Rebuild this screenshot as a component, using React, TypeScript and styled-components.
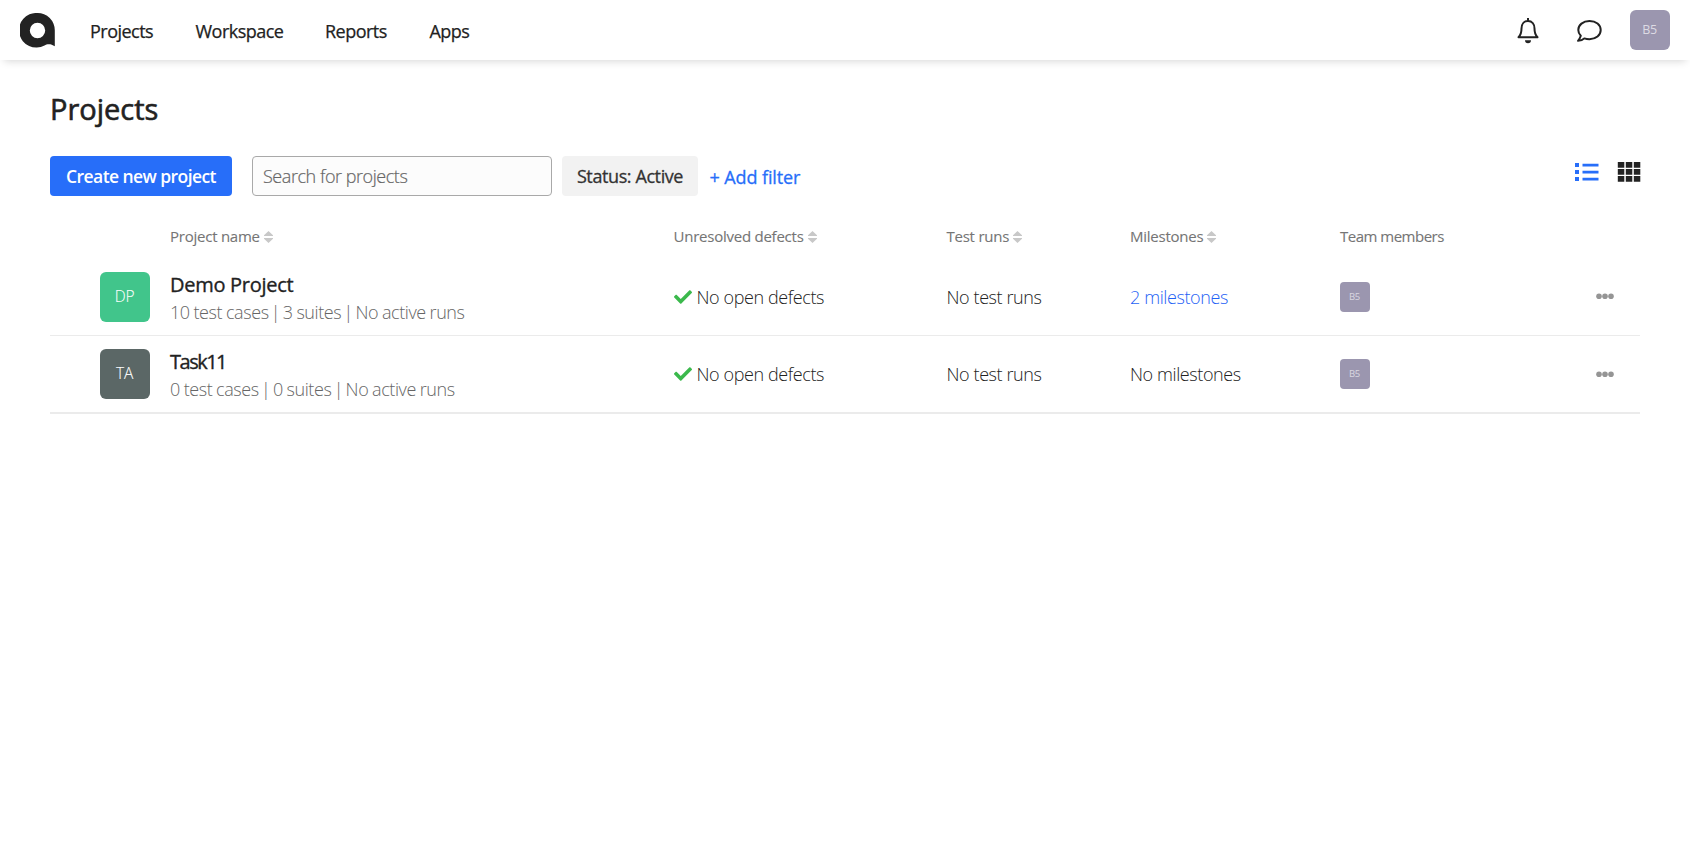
import React, { Fragment } from 'react';
import styled, { createGlobalStyle } from 'styled-components';
import { FaCheck } from 'react-icons/fa';

const GlobalStyle = createGlobalStyle`
  * { box-sizing: border-box; }
  body {
    margin: 0;
    background: #fff;
    color: #222;
    font-family: 'Segoe UI', 'Open Sans', 'Noto Sans', sans-serif;
    font-size: 18px;
  }
  a { color: inherit; text-decoration: none; }
  button, input { font: inherit; }
`;

const Header = styled.header`
  display: flex;
  align-items: center;
  height: 60px;
  padding: 0 20px;
  background: #fff;
  box-shadow: 0 5px 8px -4px rgba(0, 0, 0, 0.17);
`;
const Logo = styled.svg`
  display: block;
  margin-right: 35px;
`;
const Nav = styled.nav`
  display: flex;
  flex: 1;
  padding-top: 2px;
`;
const NavLink = styled.a<{ $width: number }>`
  width: ${(p) => p.$width}px;
  letter-spacing: -0.52px;
  -webkit-text-stroke: 0.25px;
  white-space: nowrap;
`;
const HeaderTools = styled.div`
  display: flex;
  align-items: center;
`;
const HeaderIcon = styled.svg<{ $gap: number }>`
  display: block;
  margin: 1px ${(p) => p.$gap}px 0 0;
`;
const Badge = styled.div<{ $size: number; $color: string; $font: number; $ink: string }>`
  display: flex;
  align-items: center;
  justify-content: center;
  width: ${(p) => p.$size}px;
  height: ${(p) => p.$size}px;
  padding-right: 1px;
  border-radius: ${(p) => (p.$size > 30 ? 6 : 4)}px;
  background: ${(p) => p.$color};
  color: ${(p) => p.$ink};
  font-size: ${(p) => p.$font}px;
  letter-spacing: -0.3px;
  line-height: 1;
`;
const ProjectBadge = styled(Badge)`
  font-weight: 300;
  -webkit-text-stroke: 0.1px;
`;
const Page = styled.main`
  padding: 31px 50px 0;
`;
const Title = styled.h1`
  margin: 0;
  height: 65px;
  font-size: 29px;
  font-weight: 400;
  line-height: 36px;
  -webkit-text-stroke: 0.6px;
`;
const Toolbar = styled.div`
  display: flex;
  height: 40px;
`;
const CreateButton = styled.button`
  width: 182px;
  margin-right: 20px;
  padding: 0;
  border: 0;
  border-radius: 4px;
  background: #276ef9;
  color: #fff;
  font-size: 17.5px;
  font-weight: 600;
  letter-spacing: -0.57px;
  white-space: nowrap;
`;
const Search = styled.input`
  width: 300px;
  margin-right: 10px;
  padding: 0 10px;
  border: 1px solid #a9a9a9;
  border-radius: 4px;
  background: #fcfcfc;
  font-weight: 300;
  letter-spacing: -0.45px;
  &::placeholder { color: #666; opacity: 1; -webkit-text-stroke: 0.2px; }
`;
const FilterChip = styled.button`
  width: 136px;
  padding: 0;
  border: 0;
  border-radius: 4px;
  background: #f2f2f2;
  color: #333;
  letter-spacing: -0.4px;
  -webkit-text-stroke: 0.3px;
  white-space: nowrap;
`;
const AddFilter = styled.a`
  flex: 1;
  padding: 1px 0 0 11.5px;
  color: #276ef9;
  letter-spacing: -0.1px;
  line-height: 40px;
  -webkit-text-stroke: 0.3px;
`;
const ViewIcon = styled.svg`
  display: block;
  margin: 5px -1px 0 19px;
`;
const GridRow = styled.div`
  display: grid;
  grid-template-columns: 70px 503.5px 273px 183.5px 210px 254.5px 1fr;
  align-items: center;
  padding-left: 50px;
`;
const TableHead = styled(GridRow)`
  height: 63px;
  padding-top: 18px;
  color: #757575;
  font-size: 15px;
  align-items: start;
`;
const ColumnLabel = styled.span<{ $track: number }>`
  display: flex;
  align-items: center;
  gap: 4px;
  padding-top: 12px;
  letter-spacing: ${(p) => p.$track}px;
  line-height: 21px;
  white-space: nowrap;
  -webkit-text-stroke: 0.1px;
`;
const Row = styled(GridRow)<{ $last: boolean }>`
  height: ${(p) => (p.$last ? 78 : 77)}px;
  border-bottom: ${(p) => (p.$last ? 2 : 1)}px solid #ebebeb;
`;
const ProjectInfo = styled.div`
  padding-top: 2px;
`;
const Name = styled.div<{ $track: number }>`
  font-size: 20px;
  letter-spacing: ${(p) => p.$track}px;
  line-height: 28px;
  -webkit-text-stroke: 0.35px;
`;
const Summary = styled.div`
  color: #666;
  font-weight: 300;
  letter-spacing: -0.41px;
  word-spacing: -0.5px;
  line-height: 27px;
  white-space: nowrap;
`;
const Separator = styled.span`
  margin: 0 -1.2px 0 -1.6px;
`;
const Cell = styled.div<{ $link?: boolean }>`
  display: flex;
  align-items: center;
  gap: 5px;
  color: ${(p) => (p.$link ? '#1f62f5' : '#222')};
  font-weight: 300;
  letter-spacing: -0.4px;
  white-space: nowrap;
`;
const MenuDots = styled.svg`
  display: block;
`;

const SortIcon = () => (
  <svg width="9" height="12" viewBox="0 0 9 12" fill="#c8c8c8">
    <path d="M4.500 0 9 4.200V5H0v-.800zM4.500 12 9 7.800V7H0v.800z" />
  </svg>
);

const columns = ['Project name', 'Unresolved defects', 'Test runs', 'Milestones', 'Team members'];
const projects = [
  { code: 'DP', color: '#41c58b', name: 'Demo Project', track: -0.28, summary: ['10 test cases', '3 suites', 'No active runs'], milestones: '2 milestones' },
  { code: 'TA', color: '#5b6766', name: 'Task11', track: -1.5, summary: ['0 test cases', '0 suites', 'No active runs'], milestones: 'No milestones' },
];

export default function App() {
  return (
    <>
      <GlobalStyle />
      <Header>
        <Logo width="35" height="35" viewBox="0 0 35 35">
          <path fill="#222" fillRule="evenodd" d="M17.300 0A17.300 17.300 0 0 1 34.800 17.500V33.300C31 30.500 27 30.800 24.500 32.500A17.300 17.300 0 1 1 17.300 0zM17.500 9.800a7.700 7.700 0 1 0 0 15.400 7.700 7.700 0 0 0 0-15.400z" />
        </Logo>
        <Nav>
          <NavLink $width={105.5}>Projects</NavLink>
          <NavLink $width={129.5}>Workspace</NavLink>
          <NavLink $width={104.5}>Reports</NavLink>
          <NavLink $width={60}>Apps</NavLink>
        </Nav>
        <HeaderTools>
          <HeaderIcon $gap={37} width="22" height="26" viewBox="0 0 22 26" fill="none" stroke="#222" strokeWidth="2">
            <path d="M11 0v3M1.500 19.300C3.800 17 4.500 15 4.500 10.500C4.500 6 7 3 11 3s6.500 3 6.500 7.500C17.500 15 18.200 17 20.500 19.300z" strokeLinejoin="round" />
            <path d="M8 22.300h6a3 3 0 0 1-6 0z" fill="#222" stroke="none" />
          </HeaderIcon>
          <HeaderIcon $gap={28} width="26" height="24" viewBox="0 0 26 24" fill="none" stroke="#222" strokeWidth="2">
            <path d="M13.500 2C7 2 2.300 6 2.300 11c0 2.500 1 4.300 2.500 5.800C4.300 18.500 3.300 20.300 2 21.800c2.500 0 5-1 6.300-2.400 1.500.500 3.200.800 5.200.800 6.500 0 11.200-4 11.200-9.200S20 2 13.500 2z" strokeLinejoin="round" />
          </HeaderIcon>
          <Badge $size={40} $color="#9b96af" $font={12.5} $ink="#dddbe4">B5</Badge>
        </HeaderTools>
      </Header>
      <Page>
        <Title>Projects</Title>
        <Toolbar>
          <CreateButton>Create new project</CreateButton>
          <Search placeholder="Search for projects" />
          <FilterChip>Status: Active</FilterChip>
          <AddFilter>+ Add filter</AddFilter>
          <ViewIcon width="24" height="22" viewBox="0 0 24 22" fill="#276ef9">
            <path d="M0 2h4v4H0zM0 9h4v4H0zM0 16h4v4H0zM7.500 2.800h16v2.700h-16zM7.500 9.800h16v2.700h-16zM7.500 16.800h16v2.700h-16z" />
          </ViewIcon>
          <ViewIcon width="24" height="22" viewBox="0 0 24 22" fill="#222">
            <path d="M.8 1h6.500v5.800H.8zM8.800 1h6.500v5.800H8.800zM16.800 1h6.500v5.800h-6.500zM.8 8h6.500v5.800H.8zM8.800 8h6.500v5.800H8.800zM16.800 8h6.500v5.800h-6.500zM.8 15h6.500v5.800H.8zM8.800 15h6.500v5.800H8.800zM16.800 15h6.500v5.800h-6.500z" />
          </ViewIcon>
        </Toolbar>
        <TableHead>
          <span />
          {columns.map((c, i) => (
            <ColumnLabel key={c} $track={i < 4 ? -0.24 : -0.5}>{c}{i < 4 && <SortIcon />}</ColumnLabel>
          ))}
        </TableHead>
        {projects.map((p, i) => (
          <Row key={p.code} $last={i === projects.length - 1}>
            <ProjectBadge $size={50} $color={p.color} $font={15.5} $ink="#fff">{p.code}</ProjectBadge>
            <ProjectInfo>
              <Name $track={p.track}>{p.name}</Name>
              <Summary>
                {p.summary.map((part, n) => (
                  <Fragment key={part}>{n > 0 && <> <Separator>|</Separator> </>}{part}</Fragment>
                ))}
              </Summary>
            </ProjectInfo>
            <Cell><FaCheck size={18} color="#3bb94c" />No open defects</Cell>
            <Cell>No test runs</Cell>
            <Cell $link={i === 0}>{p.milestones}</Cell>
            <Badge $size={30} $color="#9b96af" $font={9.5} $ink="#d9d7e0">B5</Badge>
            <MenuDots width="20" height="8" viewBox="0 0 20 8" fill="#959595">
              <circle cx="4" cy={3.300 + i} r="2.800" /><circle cx="10" cy={3.300 + i} r="2.800" /><circle cx="16" cy={3.300 + i} r="2.800" />
            </MenuDots>
          </Row>
        ))}
      </Page>
    </>
  );
}
